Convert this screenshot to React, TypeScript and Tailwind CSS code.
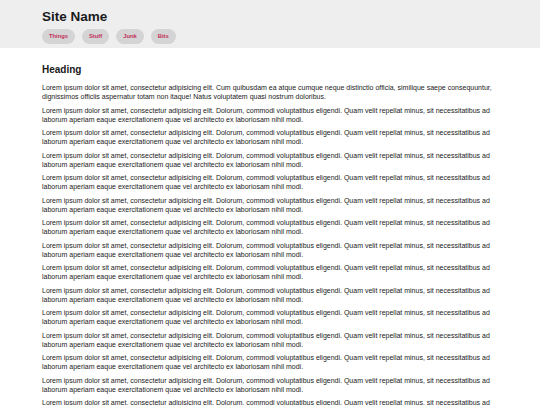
const FIRST =
  "Lorem ipsum dolor sit amet, consectetur adipisicing elit. Cum quibusdam ea atque cumque neque distinctio officia, similique saepe consequuntur, dignissimos officiis aspernatur totam non itaque! Natus voluptatem quasi nostrum doloribus.";
const REST =
  "Lorem ipsum dolor sit amet, consectetur adipisicing elit. Dolorum, commodi voluptatibus eligendi. Quam velit repellat minus, sit necessitatibus ad laborum aperiam eaque exercitationem quae vel architecto ex laboriosam nihil modi.";

const links = ["Things", "Stuff", "Junk", "Bits"];

export default function App() {
  return (
    <div className="min-h-screen bg-white text-[#1a1a1a] font-['Liberation_Sans',Arial,sans-serif]">
      <header className="h-[48px] bg-[#eeeeee] px-[42px] pt-[9px]">
        <h1 className="text-[13.5px] font-bold leading-[15px]">Site Name</h1>
        <nav className="mt-[5px] flex gap-[7px]">
          {links.map((l) => (
            <a
              key={l}
              href="#"
              className="flex h-[15px] items-center rounded-full bg-[#d4d4d4] px-[7px] text-[5.8px] font-bold text-[#c2305c]"
            >
              {l}
            </a>
          ))}
        </nav>
      </header>
      <main className="pl-[42px] pr-[46px] pt-[16px]">
        <h2 className="mb-[7px] text-[10px] font-bold leading-[12px]">Heading</h2>
        <p className="mb-[4.5px] text-[7px] leading-[9px]">{FIRST}</p>
        {Array.from({ length: 15 }).map((_, i) => (
          <p key={i} className="mb-[4.5px] text-[7px] leading-[9px]">
            {REST}
          </p>
        ))}
      </main>
    </div>
  );
}
